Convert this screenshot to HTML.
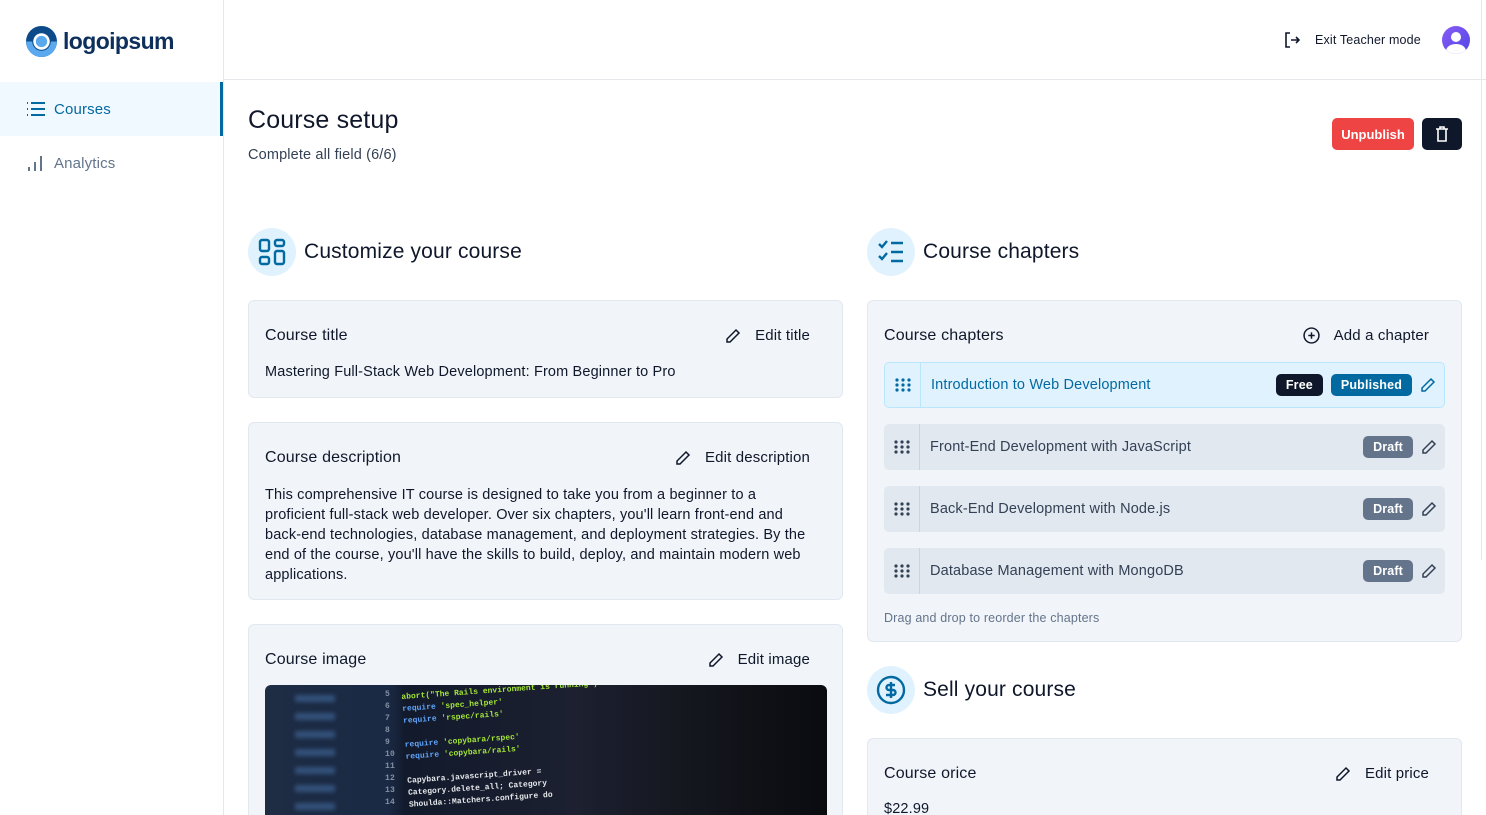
<!DOCTYPE html><html><head><meta charset="utf-8"><style>
*{box-sizing:border-box;margin:0;padding:0}
html,body{width:1486px;height:815px;overflow:hidden}
body{font-family:"Liberation Sans",sans-serif;background:#fff;color:#0f172a;position:relative;letter-spacing:0.15px}
.side{position:absolute;left:0;top:0;width:224px;height:815px;border-right:1px solid #e5e7eb}
.logo{position:absolute;left:26px;top:26px;display:flex;align-items:center;gap:6px;font-weight:bold;font-size:23px;color:#0c2f5c;letter-spacing:-0.6px}
.nav{position:absolute;left:0;width:223px;height:54px;display:flex;align-items:center;padding-left:26px;gap:8px;font-size:15px}
.hdr{position:absolute;left:224px;top:0;right:0;height:80px;border-bottom:1px solid #e5e7eb}
.card{position:absolute;background:#f1f5f9;border:1px solid #e2e8f0;border-radius:6px}
.ct{position:absolute;left:16px;top:26px;font-size:16px}
.ed{position:absolute;right:32px;top:26px;font-size:15px;display:flex;align-items:center;gap:14px}
.h2{position:absolute;display:flex;align-items:center;gap:8px;font-size:21px}
.circ{width:48px;height:48px;border-radius:50%;background:#e0f2fe;display:flex;align-items:center;justify-content:center}
.row{position:absolute;left:16px;width:561px;height:46px;background:#e2e8f0;border-radius:5px;display:flex;align-items:center;font-size:14.5px;color:#334155}
.grip{width:36px;height:100%;border-right:1px solid #cbd5e1;display:flex;align-items:center;justify-content:center;margin-right:10px}
.badge{font-size:12.5px;font-weight:bold;color:#fff;padding:4px 10px;border-radius:5px}
.pen{margin-left:8px;margin-right:8px}
</style></head><body>
<div class="side">
 <div class="logo"><svg width="31" height="31" viewBox="0 0 30 30"><circle cx="15" cy="15" r="15" fill="#0c4a8a"/><path d="M0 15a15 15 0 0 0 30 0h-6a9 9 0 0 1-18 0z" fill="#5aa9ee"/><circle cx="15" cy="15" r="8" fill="#fff"/><circle cx="15" cy="15" r="5.5" fill="#5aa9ee"/></svg>logoipsum</div>
 <div class="nav" style="top:82px;background:#f0f9ff;color:#0369a1;border-right:3px solid #0369a1"><svg width="20" height="16" viewBox="0 0 20 16" stroke="#0369a1" stroke-width="2"><path d="M1 2h1M1 8h1M1 14h1M5 2h14M5 8h14M5 14h14"/></svg><span>Courses</span></div>
 <div class="nav" style="top:136px;color:#64748b"><svg width="20" height="18" viewBox="0 0 20 18" stroke="#64748b" stroke-width="2"><path d="M3 17v-4M9 17V8M15 17V2"/></svg><span>Analytics</span></div>
</div>
<div class="hdr">
 <svg style="position:absolute;left:1060px;top:32px" width="16" height="16" viewBox="0 0 16 16" fill="none" stroke="#0f172a" stroke-width="1.6"><path d="M6 1H2v14h4M7 8h8M12 5l3 3-3 3"/></svg>
 <div style="position:absolute;left:1091px;top:33px;font-size:12.5px">Exit Teacher mode</div>
 <div style="position:absolute;left:1218px;top:26px;width:28px;height:28px;border-radius:50%;background:linear-gradient(135deg,#8b5cf6,#4f46e5);overflow:hidden"><div style="position:absolute;left:9px;top:6px;width:10px;height:10px;border-radius:50%;background:#fff"></div><div style="position:absolute;left:4px;top:18px;width:20px;height:14px;border-radius:50%;background:#fff"></div></div>
</div>
<div style="position:absolute;left:1481px;top:0;width:1px;height:560px;background:#e5e7eb"></div>
<div style="position:absolute;left:248px;top:106px;font-size:25px">Course setup</div>
<div style="position:absolute;left:248px;top:147px;font-size:14.5px;color:#334155">Complete all field (6/6)</div>
<div style="position:absolute;left:1332px;top:118px;width:82px;height:32px;background:#ef4444;border-radius:5px;color:#fff;font-size:13px;font-weight:bold;display:flex;align-items:center;justify-content:center;letter-spacing:0">Unpublish</div>
<div style="position:absolute;left:1422px;top:118px;width:40px;height:32px;background:#0f172a;border-radius:5px;display:flex;align-items:center;justify-content:center"><svg width="14" height="16" viewBox="0 0 14 16" fill="none" stroke="#fff" stroke-width="1.6"><path d="M1 3h12M5 3V1h4v2M3 3v12h8V3"/></svg></div>

<div class="h2" style="left:248px;top:228px"><div class="circ"><svg width="28" height="28" viewBox="0 0 28 28" fill="none" stroke="#0369a1" stroke-width="2.4"><rect x="2" y="2" width="9" height="11" rx="2"/><rect x="17" y="2" width="9" height="6" rx="2"/><rect x="17" y="13" width="9" height="13" rx="2"/><rect x="2" y="19" width="9" height="7" rx="2"/></svg></div>Customize your course</div>
<div class="h2" style="left:867px;top:228px"><div class="circ"><svg width="28" height="26" viewBox="0 0 28 26" fill="none" stroke="#0369a1" stroke-width="2.4"><path d="M2 5l3 3 5-6M2 17l3 3 5-6M14 4h12M14 13h12M14 22h12"/></svg></div>Course chapters</div>
<div class="h2" style="left:867px;top:666px"><div class="circ"><svg width="32" height="32" viewBox="0 0 32 32" fill="none" stroke="#0369a1" stroke-width="2.4"><circle cx="16" cy="16" r="13"/><path d="M20 11h-6a2.5 2.5 0 0 0 0 5h4a2.5 2.5 0 0 1 0 5h-7M16 8v16"/></svg></div>Sell your course</div>

<svg width="0" height="0" style="position:absolute"><defs><symbol id="pen" viewBox="0 0 16 16"><path d="M11 2l3 3-9 9H2v-3z" fill="none" stroke-width="1.5"/></symbol></defs></svg>

<div class="card" style="left:248px;top:300px;width:595px;height:98px"><div class="ct">Course title</div><div class="ed"><svg width="16" height="16" stroke="#0f172a"><use href="#pen"/></svg>Edit title</div><div style="position:absolute;left:16px;top:63px;font-size:14.5px">Mastering Full-Stack Web Development: From Beginner to Pro</div></div>
<div class="card" style="left:248px;top:422px;width:595px;height:178px"><div class="ct">Course description</div><div class="ed"><svg width="16" height="16" stroke="#0f172a"><use href="#pen"/></svg>Edit description</div><div style="position:absolute;left:16px;top:62px;width:550px;font-size:14.5px;line-height:20px">This comprehensive IT course is designed to take you from a beginner to a proficient full-stack web developer. Over six chapters, you'll learn front-end and back-end technologies, database management, and deployment strategies. By the end of the course, you'll have the skills to build, deploy, and maintain modern web applications.</div></div>
<div class="card" style="left:248px;top:624px;width:595px;height:200px"><div class="ct">Course image</div><div class="ed"><svg width="16" height="16" stroke="#0f172a"><use href="#pen"/></svg>Edit image</div>
 <div style="position:absolute;left:16px;top:60px;width:562px;height:140px;border-radius:6px;overflow:hidden;background:linear-gradient(90deg,#1e2c44 0%,#1a2a44 22%,#121a2c 25%,#1c2030 55%,#15171f 75%,#0a0b0f 100%)">
  <div style="position:absolute;left:30px;top:10px;width:40px;height:120px;background:repeating-linear-gradient(#4a78b0 0 7px,transparent 7px 18px);opacity:.5;filter:blur(2px)"></div>
  <div style="position:absolute;left:120px;top:4px;font:bold 8px 'Liberation Mono',monospace;color:#cbd5e1;line-height:12px;opacity:.6">5<br>6<br>7<br>8<br>9<br>10<br>11<br>12<br>13<br>14</div>
  <div style="position:absolute;left:140px;top:0;font:bold 8px 'Liberation Mono',monospace;color:#a3e635;line-height:12px;transform:rotate(-4deg);white-space:pre;letter-spacing:0">abort("The Rails environment is running")
<span style="color:#60a5fa">require</span> 'spec_helper'
<span style="color:#60a5fa">require</span> 'rspec/rails'

<span style="color:#60a5fa">require</span> 'copybara/rspec'
<span style="color:#60a5fa">require</span> 'copybara/rails'

<span style="color:#e5e7eb">Capybara.javascript_driver = </span>
<span style="color:#e5e7eb">Category.delete_all; Category</span>
<span style="color:#e5e7eb">Shoulda::Matchers.configure do</span></div>
 </div></div>

<div class="card" style="left:867px;top:300px;width:595px;height:342px">
 <div class="ct">Course chapters</div>
 <div class="ed"><svg width="17" height="17" viewBox="0 0 16 16" fill="none" stroke="#0f172a" stroke-width="1.4"><circle cx="8" cy="8" r="7"/><path d="M8 5v6M5 8h6"/></svg>Add a chapter</div>
 <div class="row" style="top:61px;background:#e0f2fe;border:1px solid #bae6fd;color:#0369a1"><div class="grip" style="border-color:#bae6fd"><svg width="16" height="14" fill="#0369a1"><circle cx="2" cy="2" r="1.6"/><circle cx="8" cy="2" r="1.6"/><circle cx="14" cy="2" r="1.6"/><circle cx="2" cy="7" r="1.6"/><circle cx="8" cy="7" r="1.6"/><circle cx="14" cy="7" r="1.6"/><circle cx="2" cy="12" r="1.6"/><circle cx="8" cy="12" r="1.6"/><circle cx="14" cy="12" r="1.6"/></svg></div>Introduction to Web Development<span style="flex:1"></span><span class="badge" style="background:#0f172a;margin-right:8px">Free</span><span class="badge" style="background:#0369a1">Published</span><svg class="pen" width="16" height="16" stroke="#0369a1"><use href="#pen"/></svg></div>
 <div class="row" style="top:123px"><div class="grip"><svg width="16" height="14" fill="#334155"><circle cx="2" cy="2" r="1.6"/><circle cx="8" cy="2" r="1.6"/><circle cx="14" cy="2" r="1.6"/><circle cx="2" cy="7" r="1.6"/><circle cx="8" cy="7" r="1.6"/><circle cx="14" cy="7" r="1.6"/><circle cx="2" cy="12" r="1.6"/><circle cx="8" cy="12" r="1.6"/><circle cx="14" cy="12" r="1.6"/></svg></div>Front-End Development with JavaScript<span style="flex:1"></span><span class="badge" style="background:#64748b">Draft</span><svg class="pen" width="16" height="16" stroke="#334155"><use href="#pen"/></svg></div>
 <div class="row" style="top:185px"><div class="grip"><svg width="16" height="14" fill="#334155"><circle cx="2" cy="2" r="1.6"/><circle cx="8" cy="2" r="1.6"/><circle cx="14" cy="2" r="1.6"/><circle cx="2" cy="7" r="1.6"/><circle cx="8" cy="7" r="1.6"/><circle cx="14" cy="7" r="1.6"/><circle cx="2" cy="12" r="1.6"/><circle cx="8" cy="12" r="1.6"/><circle cx="14" cy="12" r="1.6"/></svg></div>Back-End Development with Node.js<span style="flex:1"></span><span class="badge" style="background:#64748b">Draft</span><svg class="pen" width="16" height="16" stroke="#334155"><use href="#pen"/></svg></div>
 <div class="row" style="top:247px"><div class="grip"><svg width="16" height="14" fill="#334155"><circle cx="2" cy="2" r="1.6"/><circle cx="8" cy="2" r="1.6"/><circle cx="14" cy="2" r="1.6"/><circle cx="2" cy="7" r="1.6"/><circle cx="8" cy="7" r="1.6"/><circle cx="14" cy="7" r="1.6"/><circle cx="2" cy="12" r="1.6"/><circle cx="8" cy="12" r="1.6"/><circle cx="14" cy="12" r="1.6"/></svg></div>Database Management with MongoDB<span style="flex:1"></span><span class="badge" style="background:#64748b">Draft</span><svg class="pen" width="16" height="16" stroke="#334155"><use href="#pen"/></svg></div>
 <div style="position:absolute;left:16px;top:310px;font-size:12.5px;color:#64748b">Drag and drop to reorder the chapters</div>
</div>
<div class="card" style="left:867px;top:738px;width:595px;height:100px"><div class="ct">Course orice</div><div class="ed"><svg width="16" height="16" stroke="#0f172a"><use href="#pen"/></svg>Edit price</div><div style="position:absolute;left:16px;top:62px;font-size:14.5px">$22.99</div></div>
</body></html>
